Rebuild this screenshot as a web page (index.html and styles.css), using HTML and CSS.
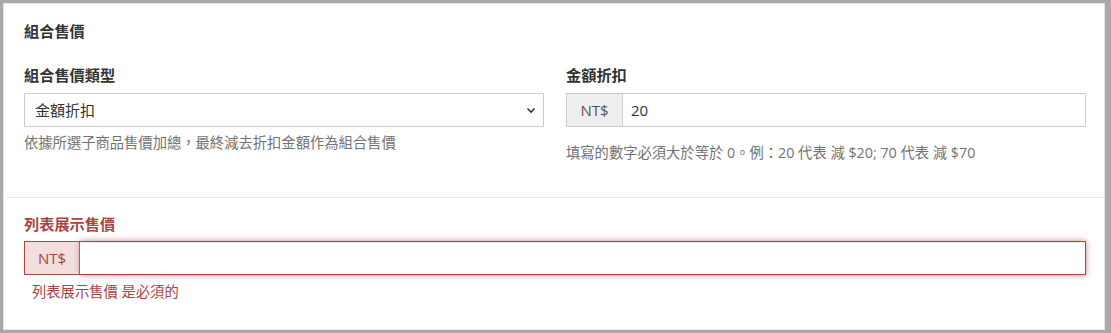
FILE: index.html
```html
<!DOCTYPE html>
<html lang="zh-Hant">
<head>
    <meta charset="UTF-8">
    <meta name="viewport" content="width=device-width, initial-scale=1.0">
    <title>組合售價</title>
    <link rel="stylesheet" href="styles.css">
</head>
<body>
    <div class="panel">
        <section class="section bundle">
            <h2>組合售價</h2>
            <div class="row">
                <div class="field">
                    <label for="bundle-type">組合售價類型</label>
                    <div class="select-wrap">
                        <select id="bundle-type" class="form-control">
                            <option>金額折扣</option>
                            <option>百分比折扣</option>
                            <option>固定售價</option>
                        </select>
                        <svg class="caret" width="10" height="7" viewBox="0 0 10 7"><path d="M1.5 1.5 L5 5 L8.5 1.5" fill="none" stroke="#333" stroke-width="1.6"/></svg>
                    </div>
                    <p class="help">依據所選子商品售價加總，最終減去折扣金額作為組合售價</p>
                </div>
                <div class="field">
                    <label for="discount">金額折扣</label>
                    <div class="input-group">
                        <span class="addon">NT$</span>
                        <input type="text" id="discount" class="form-control" value="20">
                    </div>
                    <p class="help help-low">填寫的數字必須大於等於 0。例：20 代表 減 $20; 70 代表 減 $70</p>
                </div>
            </div>
        </section>
        <section class="section list-price has-error">
            <label for="list-price">列表展示售價</label>
            <div class="input-group">
                <span class="addon">NT$</span>
                <input type="text" id="list-price" class="form-control">
            </div>
            <p class="error-msg">列表展示售價 是必須的</p>
        </section>
    </div>
</body>
</html>
```

FILE: styles.css
```css
* {
    margin: 0;
    padding: 0;
    box-sizing: border-box;
    font-family: "Open Sans", "Noto Sans CJK TC", sans-serif;
}
html, body {
    height: 333px;
    overflow: hidden;
}
body {
    background: #a9a9a9;
    padding: 3px 6px 3px 3px;
    color: #333;
}
.panel {
    height: 327px;
    background: #fff;
    border: 1px solid #e6e6e6;
}
.section {
    padding: 0 18px 0 20px;
}
.bundle {
    padding-top: 17px;
    padding-bottom: 34px;
}
.bundle h2 {
    font-size: 15.2px;
    font-weight: 700;
    line-height: 20px;
    margin-bottom: 24px;
}
.row {
    display: grid;
    grid-template-columns: 1fr 1fr;
    gap: 22px;
}
label {
    display: block;
    font-size: 15.2px;
    font-weight: 700;
    line-height: 20px;
    margin-bottom: 8px;
}
.form-control {
    display: block;
    width: 100%;
    height: 34px;
    padding: 6px 12px;
    font-size: 15px;
    color: #333;
    background: #fff;
    border: 1px solid #ccc;
    border-radius: 0;
    outline: none;
}
.select-wrap {
    position: relative;
}
.select-wrap select {
    appearance: none;
    -webkit-appearance: none;
    padding-left: 10px;
}
.caret {
    position: absolute;
    right: 8px;
    top: 14px;
    pointer-events: none;
}
.input-group {
    display: flex;
}
.addon {
    display: flex;
    align-items: center;
    justify-content: center;
    width: 56px;
    flex: none;
    height: 34px;
    font-size: 15px;
    color: #555;
    background: #eee;
    border: 1px solid #ccc;
    border-right: none;
}
.input-group .form-control {
    flex: 1;
    padding-left: 8px;
}
.help {
    font-size: 14.3px;
    line-height: 20px;
    color: #737373;
    margin-top: 6px;
}
.help-low {
    margin-top: 16px;
}
.list-price {
    border-top: 1px solid #e5e5e5;
    margin-left: 3px;
    padding-left: 17px;
    padding-top: 16px;
}
.has-error label {
    color: #a94442;
    margin-bottom: 7px;
}
.has-error .addon {
    color: #a94442;
    background: #f2dede;
    border-color: #a94442;
    border-right: 1px solid #a94442;
}
.has-error .form-control {
    border-color: #a94442;
    border-left: none;
    box-shadow: inset 0 1px 1px rgba(0,0,0,0.075), 0 0 6px #ce8483;
}
.error-msg {
    font-size: 14.3px;
    line-height: 20px;
    color: #a94442;
    margin-top: 7px;
    padding-left: 8px;
}
```
